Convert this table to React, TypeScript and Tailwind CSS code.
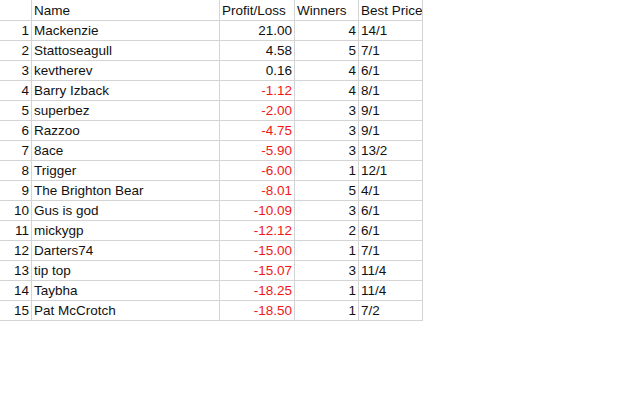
import React from 'react';

interface Row {
  name: string;
  pl: number;
  winners: number;
  price: string;
}

const rows: Row[] = [
  { name: 'Mackenzie', pl: 21.0, winners: 4, price: '14/1' },
  { name: 'Stattoseagull', pl: 4.58, winners: 5, price: '7/1' },
  { name: 'kevtherev', pl: 0.16, winners: 4, price: '6/1' },
  { name: 'Barry Izback', pl: -1.12, winners: 4, price: '8/1' },
  { name: 'superbez', pl: -2.0, winners: 3, price: '9/1' },
  { name: 'Razzoo', pl: -4.75, winners: 3, price: '9/1' },
  { name: '8ace', pl: -5.9, winners: 3, price: '13/2' },
  { name: 'Trigger', pl: -6.0, winners: 1, price: '12/1' },
  { name: 'The Brighton Bear', pl: -8.01, winners: 5, price: '4/1' },
  { name: 'Gus is god', pl: -10.09, winners: 3, price: '6/1' },
  { name: 'mickygp', pl: -12.12, winners: 2, price: '6/1' },
  { name: 'Darters74', pl: -15.0, winners: 1, price: '7/1' },
  { name: 'tip top', pl: -15.07, winners: 3, price: '11/4' },
  { name: 'Taybha', pl: -18.25, winners: 1, price: '11/4' },
  { name: 'Pat McCrotch', pl: -18.5, winners: 1, price: '7/2' },
];

// excel-ish cell: gridline on right and bottom, text sits near the bottom
const cell = 'border-r border-b border-[#d4d4d4] flex items-end pb-[1px] whitespace-nowrap overflow-hidden';

const App: React.FC = () => {
  return (
    <div
      className="w-[640px] h-[400px] bg-white text-[#111] text-[13.5px] leading-[17px]"
      style={{ fontFamily: '"Liberation Sans", Arial, sans-serif' }}
    >
      <div className="grid grid-cols-[32px_188px_75px_64px_64px] w-max">
        {/* header */}
        <div className={`${cell} h-[21px]`} />
        <div className={`${cell} h-[21px] pl-[2px]`}>Name</div>
        <div className={`${cell} h-[21px] pl-[2px]`}>Profit/Loss</div>
        <div className={`${cell} h-[21px] pl-[2px]`}>Winners</div>
        <div className={`${cell} h-[21px] pl-[2px]`}>Best Price</div>

        {rows.map((r, i) => (
          <React.Fragment key={r.name}>
            <div className={`${cell} h-[20px] justify-end pr-[2px]`}>{i + 1}</div>
            <div className={`${cell} h-[20px] pl-[2px]`}>{r.name}</div>
            <div className={`${cell} h-[20px] justify-end pr-[2px] ${r.pl < 0 ? 'text-[#f01818]' : ''}`}>
              {r.pl.toFixed(2)}
            </div>
            <div className={`${cell} h-[20px] justify-end pr-[2px]`}>{r.winners}</div>
            <div className={`${cell} h-[20px] pl-[2px]`}>{r.price}</div>
          </React.Fragment>
        ))}
      </div>
    </div>
  );
};

export default App;
